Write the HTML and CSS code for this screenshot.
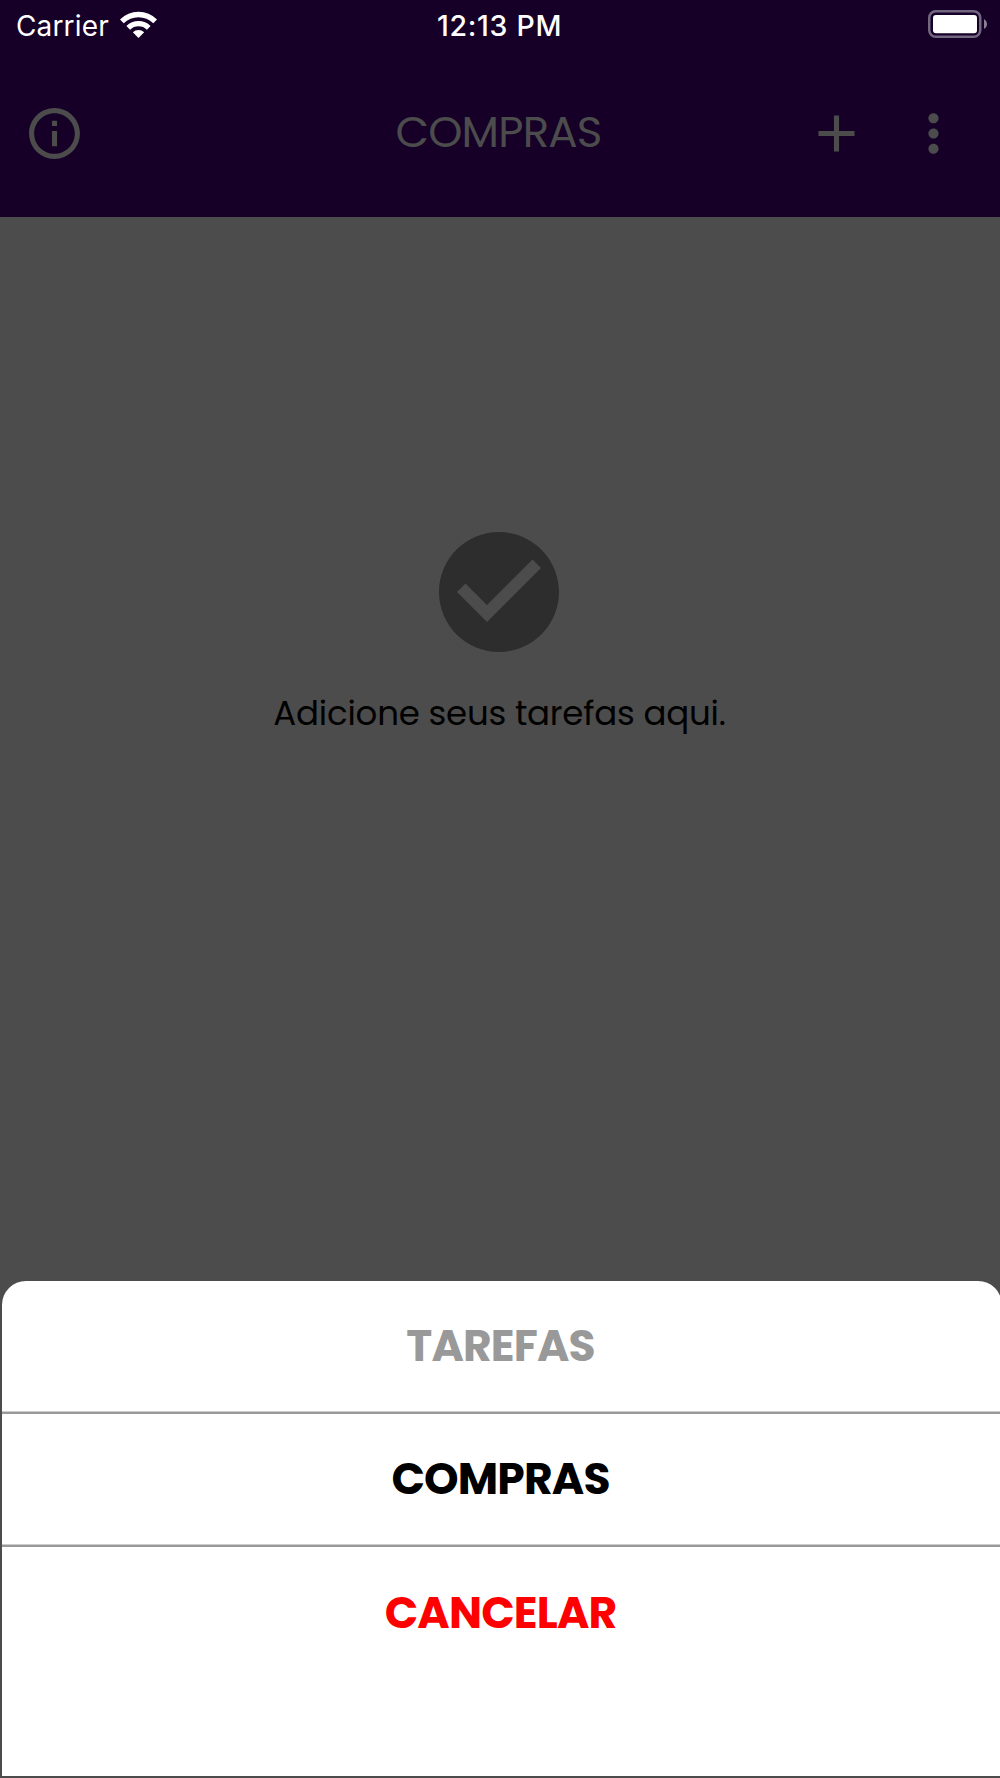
FILE: index.html
```
<!DOCTYPE html>
<html lang="pt">
<head>
  <title>Compras</title>
  <link rel="stylesheet" href="styles.css">
  <meta charset="utf-8">
  <meta name="viewport" content="width=device-width">
</head>

<body>
  <div class="screen">
  <header class="top">
    <div class="status">
      <div class="carrier">
        <span>Carrier</span>
        <svg class="wifi" viewBox="0 0 37 27">
          <path d="M0 8.5A26 26 0 0 1 37 8.5L33.3 12.3A21 21 0 0 0 3.7 12.3Z"/>
          <path d="M6.4 15A17.2 17.2 0 0 1 30.6 15L26.9 18.7A12 12 0 0 0 10.1 18.7Z"/>
          <path d="M12.8 21.3A8.3 8.3 0 0 1 24.2 21.3L18.5 27Z"/>
        </svg>
      </div>
      <span class="time">12:13 PM</span>
      <svg class="battery" viewBox="0 0 60 28">
        <rect class="shell" x="1.25" y="1.25" width="51" height="25.5" rx="6.5"/>
        <rect class="level" x="5" y="5" width="44" height="18.3" rx="3"/>
        <path class="nub" d="M56 9Q59.2 11 59.2 14T56 19Z"/>
      </svg>
    </div>
    <nav class="navbar">
      <svg class="icon" viewBox="0 0 24 24"><path d="M11 7h2v2h-2zM11 11h2v6h-2zM12 2C6.48 2 2 6.48 2 12s4.48 10 10 10 10-4.48 10-10S17.52 2 12 2zm0 18c-4.41 0-8-3.59-8-8s3.59-8 8-8 8 3.59 8 8-3.59 8-8 8z"/></svg>
      <h1 class="title">COMPRAS</h1>
      <div class="actions">
        <svg class="icon" viewBox="0 0 24 24"><path d="M19.1 13H13v6.1h-2V13H4.9v-2H11V4.9h2V11h6.1v2z"/></svg>
        <svg class="icon" viewBox="0 0 24 24"><path d="M12 8c1.1 0 2-.9 2-2s-.9-2-2-2-2 .9-2 2 .9 2 2 2zm0 2c-1.1 0-2 .9-2 2s.9 2 2 2 2-.9 2-2-.9-2-2-2zm0 6c-1.1 0-2 .9-2 2s.9 2 2 2 2-.9 2-2-.9-2-2-2z"/></svg>
      </div>
    </nav>
  </header>
  <main class="empty">
    <svg class="check" viewBox="0 0 24 24"><path d="M12 2C6.48 2 2 6.48 2 12s4.48 10 10 10 10-4.48 10-10S17.52 2 12 2zm-2 15l-5-5 1.41-1.41L10 14.17l7.59-7.59L19 8l-9 9z"/></svg>
    <p class="hint">Adicione seus tarefas aqui.</p>
  </main>
  <div class="sheet">
    <div class="option off"><span>TAREFAS</span></div>
    <div class="option"><span>COMPRAS</span></div>
    <div class="option cancel"><span>CANCELAR</span></div>
  </div>
  </div>
</body>
</html>
```
FILE: styles.css
```
* {
  box-sizing: border-box;
}
body {
  margin: 0;
  background: #4c4c4c;
  font-family: Poppins, Inter, sans-serif;
}
svg {
  display: block;
  flex: none;
}
.screen {
  display: flex;
  flex-direction: column;
  width: 1000px;
  height: 1778px;
  overflow: hidden;
}
/*Header*/
.top {
  height: 217px;
  background: #160028;
}
.status {
  display: grid;
  grid-template-columns: 1fr auto 1fr;
  align-items: center;
  height: 49px;
  padding: 0 12px 0 16px;
  color: #fff;
  font-family: Inter, sans-serif;
  font-size: 28px;
}
.carrier {
  display: flex;
  align-items: center;
  gap: 11px;
  padding-top: 2px;
  letter-spacing: 0.15px;
}
.wifi {
  width: 37px;
  height: 27px;
  margin-top: -3px;
  fill: #fff;
}
.time {
  padding-top: 1px;
  margin: 0 5px 0 0;
  font-size: 28.5px;
  font-weight: 550;
  letter-spacing: 0.7px;
}
.battery {
  width: 60px;
  height: 28px;
  margin-top: -1px;
  justify-self: end;
}
.shell {
  fill: none;
  stroke: #736680;
  stroke-width: 2.5;
}
.level {fill: #fff;}
.nub {fill: #8b8094;}
.navbar {
  display: grid;
  grid-template-columns: 1fr auto 1fr;
  align-items: center;
  height: 168px;
  padding: 0 36px 0 24px;
}
.icon {
  width: 61px;
  height: 61px;
  fill: #4c4c4c;
}
.title {
  margin: 0 0 2px 9px;
  color: #4c4c4c;
  font-size: 43.5px;
  font-weight: 400;
  line-height: 60px;
  letter-spacing: -0.8px;
}
.actions {
  display: flex;
  justify-content: flex-end;
  gap: 36px;
}
/*Empty list*/
.empty {
  display: flex;
  flex-direction: column;
  align-items: center;
  flex: 1;
  padding: 303px 1px 0 0;
}
.check {
  width: 144px;
  height: 144px;
  margin-right: 1px;
  fill: #2d2d2d;
}
.hint {
  margin: 29px 0 0;
  color: #000;
  font-size: 34px;
  line-height: 40px;
  letter-spacing: -0.2px;
}
/*Bottom sheet*/
.sheet {
  width: 1000px;
  height: 495px;
  margin: 0 0 2px 2px;
  border-radius: 24px 24px 0 0;
  background: #fff;
}
.option {
  display: flex;
  align-items: center;
  justify-content: center;
  height: 133px;
  padding: 0 3px 2px 0;
  border-bottom: 2px solid #999;
  box-shadow: inset 0 -1px #ccc;
  font-size: 44px;
  font-weight: 700;
  line-height: 60px;
  letter-spacing: -0.85px;
}
.off {color: #999;}
.cancel {
  border: none;
  box-shadow: none;
  color: #f00;
}
```
